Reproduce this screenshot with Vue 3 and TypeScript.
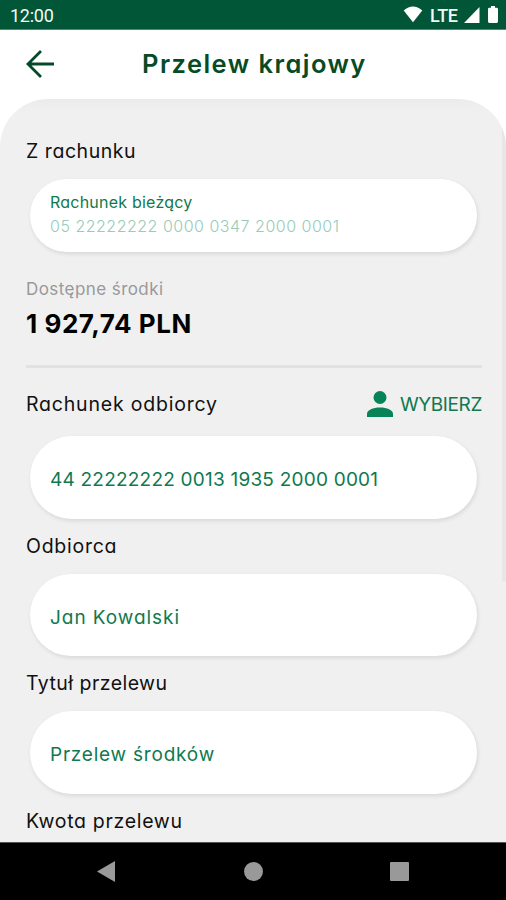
<script setup lang="ts">
interface Field {
  id: string
  label: string
  value: string
}

const fields: Field[] = [
  { id: 'recipient', label: 'Odbiorca', value: 'Jan Kowalski' },
  { id: 'subject', label: 'Tytuł przelewu', value: 'Przelew środków' },
]
</script>

<template>
  <div class="screen">
    <header class="status">
      <span class="clock">12:00</span>
      <div class="indicators">
        <svg class="wifi" viewBox="0 0 20 17"><path d="M.7 4.4Q10-3.6 19.3 4.4L10 16.3Z" /></svg>
        <span class="lte">LTE</span>
        <svg class="signal" viewBox="0 0 16 16"><path d="M15.5 0V16H0Z" /></svg>
        <svg class="battery" viewBox="0 0 10 17"><path d="M3 0h4v1.8h1.6Q10 1.8 10 3.2v12.4Q10 17 8.600 17H1.400Q0 17 0 15.600V3.200Q0 1.800 1.400 1.800H3Z" /></svg>
      </div>
    </header>
    <div class="topbar">
      <svg class="back" viewBox="0 0 30 30"><path d="M29 15H3M16 2L3 15L16 28" /></svg>
      <h1 class="title">Przelew krajowy</h1>
    </div>
    <main class="panel">
      <div class="label source">Z rachunku</div>
      <div class="pill account">
        <div class="name">Rachunek bieżący</div>
        <div class="number">05 22222222 0000 0347 2000 0001</div>
      </div>
      <div class="hint">Dostępne środki</div>
      <div class="amount">1 927,74 PLN</div>
      <hr class="rule" />
      <div class="row">
        <div class="label to">Rachunek odbiorcy</div>
        <div class="choose">
          <svg class="person" viewBox="0 0 26 26"><circle cx="13" cy="6.500" r="6.500" /><path d="M0 26V23C0 19 6 16.500 13 16.500S26 19 26 23V26Z" /></svg>
          <span class="pick">WYBIERZ</span>
        </div>
      </div>
      <div class="pill field"><span class="value iban">44 22222222 0013 1935 2000 0001</span></div>
      <template v-for="f in fields" :key="f.id">
        <div class="label" :class="f.id">{{ f.label }}</div>
        <div class="pill field"><span class="value" :class="'v-' + f.id">{{ f.value }}</span></div>
      </template>
      <div class="label sum">Kwota przelewu</div>
      <div class="thumb"></div>
    </main>
    <nav class="nav">
      <svg class="tri" viewBox="0 0 18 21"><path d="M18 0V21L0 10.500Z" /></svg>
      <span class="dot"></span>
      <span class="square"></span>
    </nav>
  </div>
</template>

<style>
body {
  margin: 0;
  background: #fff;
}
</style>

<style scoped>
.screen {
  box-sizing: border-box;
  width: 506px;
  height: 900px;
  display: flex;
  flex-direction: column;
  overflow: hidden;
  background: #fff;
  color: #111;
  font-family: Inter, 'Open Sans', sans-serif;
  font-feature-settings: 'cv11' 1, 'calt' 0;
  white-space: nowrap;
}
.status {
  box-sizing: border-box;
  height: 30px;
  flex: none;
  display: flex;
  justify-content: space-between;
  padding: 0 8px 0 10px;
  background: #005636;
  border-bottom: 1px solid #4c8a72;
  color: #f4faf6;
  font: 500 18px/32px Roboto, sans-serif;
}
.clock { font-weight: 400; letter-spacing: -0.25px; }
.indicators {
  display: flex;
  align-items: flex-start;
  fill: #fff;
}
.wifi { width: 20px; height: 17px; margin: 6px 7px 0 0; }
.lte { width: 29px; line-height: 31px; letter-spacing: -0.4px; }
.signal { width: 16px; height: 16px; margin: 7px 8px 0 5px; }
.battery { width: 10px; height: 17px; margin: 6px 0 0; }
.topbar {
  flex: none;
  height: 68.500px;
  display: flex;
  align-items: center;
}
.back {
  width: 30px;
  height: 30px;
  margin-left: 25px;
  fill: none;
  stroke: #044a29;
  stroke-width: 2.800;
}
.title {
  margin: 0 0 1px 87px;
  color: #074b25;
  font-size: 25.500px;
  font-weight: 600;
  line-height: 36px;
  letter-spacing: 1.450px;
}
.panel {
  position: relative;
  box-sizing: border-box;
  height: 743.500px;
  flex: none;
  padding: 38px 24px 0 26px;
  overflow: hidden;
  border-radius: 48px 48px 0 0;
  background: linear-gradient(#ebebeb, #f0f0f0 12px);
}
.label {
  font-size: 19.500px;
  line-height: 28px;
  letter-spacing: 0.800px;
}
.source { letter-spacing: 0.550px; }
.recipient { letter-spacing: 0.750px; }
.subject { letter-spacing: 0.460px; }
.sum { letter-spacing: 0.680px; }
.pill {
  box-sizing: border-box;
  width: 447px;
  margin-left: 4px;
  padding-left: 20px;
  border-radius: 42px;
  background: #fff;
  box-shadow: 1px 2px 4px rgba(0, 0, 0, 0.1);
}
.account {
  height: 73px;
  margin-top: 14px;
  padding-top: 11.500px;
}
.name {
  color: #10794f;
  font-size: 16px;
  line-height: 24px;
  letter-spacing: 0.220px;
}
.number {
  color: #98cbb8;
  font-size: 16px;
  font-weight: 300;
  line-height: 24px;
  letter-spacing: 0.500px;
}
.hint {
  margin-top: 25px;
  color: #999;
  font-size: 17px;
  line-height: 24px;
  letter-spacing: 0.430px;
}
.amount {
  margin-top: 4px;
  color: #000;
  font-size: 26px;
  font-weight: 700;
  line-height: 38px;
  letter-spacing: 0.550px;
}
.rule {
  height: 3px;
  margin: 22px 0 0;
  border: 0;
  background: #e2e2e2;
}
.row {
  height: 68.500px;
  box-sizing: border-box;
  padding-top: 22px;
  display: flex;
  justify-content: space-between;
}
.choose {
  display: flex;
  gap: 7px;
  color: #10794f;
}
.person {
  width: 26px;
  height: 26px;
  margin-top: 1.500px;
  fill: #068458;
}
.pick {
  width: 82px;
  font-size: 19px;
  line-height: 29px;
  letter-spacing: -0.400px;
}
.field {
  height: 82.500px;
  display: flex;
  align-items: center;
  padding-top: 6px;
  margin-bottom: 13px;
}
.value {
  color: #10794f;
  font-size: 19px;
  line-height: 28px;
  letter-spacing: 0.780px;
}
.iban { letter-spacing: 0.220px; }
.v-recipient { letter-spacing: 0.950px; }
.field + .label { margin-bottom: 14px; }
.thumb {
  position: absolute;
  top: 0;
  right: 0;
  width: 4px;
  height: 482px;
  background: #e7e7e7;
}
.nav {
  box-sizing: border-box;
  position: relative;
  flex: none;
  height: 58px;
  display: flex;
  align-items: center;
  padding: 0 97px;
  justify-content: space-between;
  border-top: 1px solid #555;
  background: #000;
}
.tri { width: 18px; height: 21px; fill: #999; }
.dot { width: 19px; height: 19px; margin-left: 1px; border-radius: 50%; background: #999; }
.square { width: 19px; height: 19px; border-radius: 1px; background: #999; }
</style>
